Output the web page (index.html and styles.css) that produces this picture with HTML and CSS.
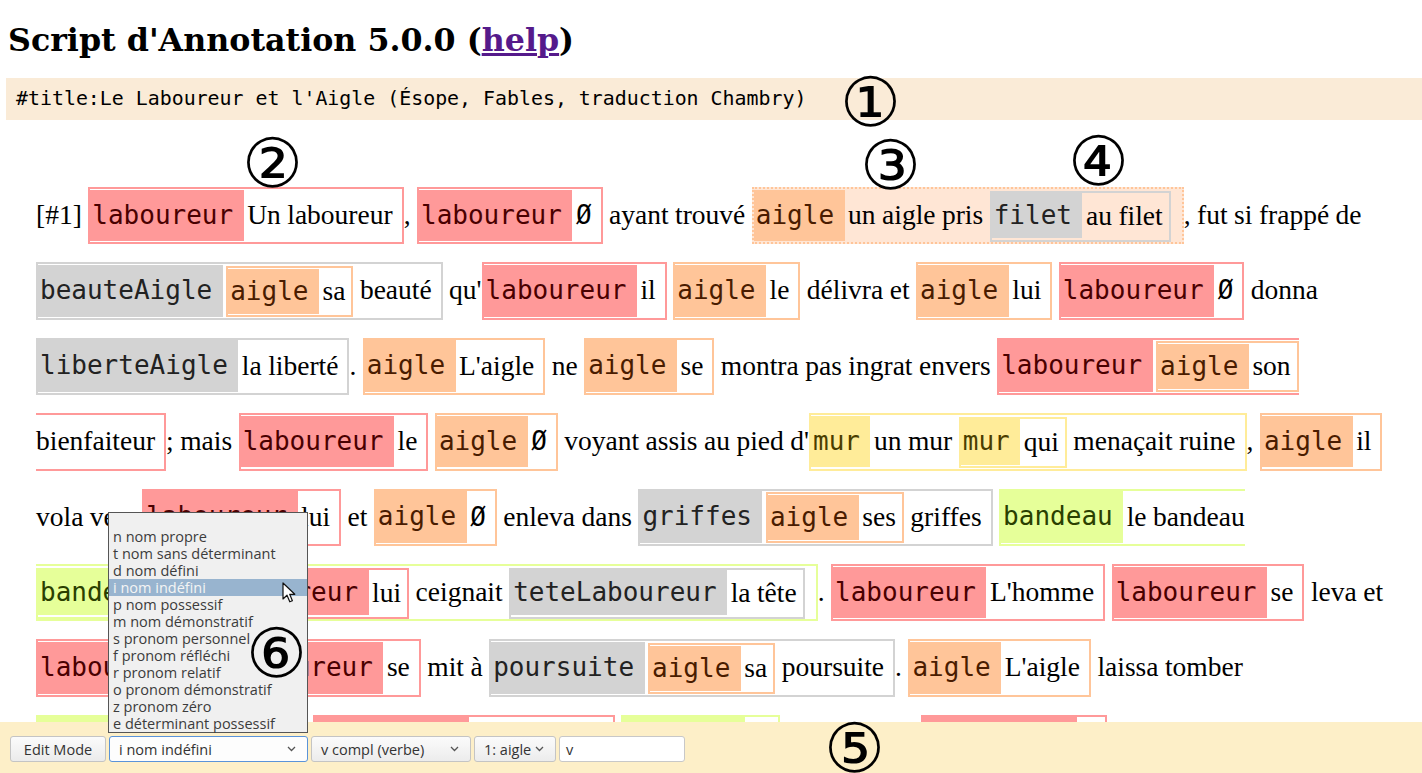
FILE: index.html
```html
<!DOCTYPE html>
<html lang="fr">
<head>
<meta charset="utf-8">
<title>Script d'Annotation 5.0.0</title>
<link rel="stylesheet" href="styles.css">
</head>
<body>
<main class="content">
<h1>Script d'Annotation 5.0.0 (<a href="#help">help</a>)</h1>
<div class="title-bar">#title:Le Laboureur et l'Aigle (Ésope, Fables, traduction Chambry)</div>
<p class="text">[#1] <span class="a p"><span class="t">laboureur</span><span class="w">Un laboureur</span></span>, <span class="a p"><span class="t">laboureur</span><span class="w z">Ø</span></span> ayant trouvé <span class="a o sel pe"><span class="t">aigle</span><span class="w">un aigle pris</span> <span class="a g n"><span class="t">filet</span><span class="w">au filet</span></span></span>, fut si frappé de<br><span class="a g"><span class="t">beauteAigle</span><span class="a o n"><span class="t">aigle</span><span class="w">sa</span></span> <span class="w">beauté</span></span> qu'<span class="a p"><span class="t">laboureur</span><span class="w">il</span></span> <span class="a o"><span class="t">aigle</span><span class="w">le</span></span> délivra et <span class="a o"><span class="t">aigle</span><span class="w">lui</span></span> <span class="a p"><span class="t">laboureur</span><span class="w z">Ø</span></span> donna<br><span class="a g"><span class="t">liberteAigle</span><span class="w">la liberté</span></span>. <span class="a o"><span class="t">aigle</span><span class="w">L'aigle</span></span> ne <span class="a o"><span class="t">aigle</span><span class="w">se</span></span> montra pas ingrat envers <span class="a p"><span class="t">laboureur</span><span class="a o n"><span class="t">aigle</span><span class="w">son</span></span><br><span class="w">bienfaiteur</span></span>; mais <span class="a p"><span class="t">laboureur</span><span class="w">le</span></span> <span class="a o"><span class="t">aigle</span><span class="w z">Ø</span></span> voyant assis au pied d'<span class="a y"><span class="t">mur</span><span class="w">un mur</span> <span class="a y n"><span class="t">mur</span><span class="w">qui</span></span> <span class="w">menaçait ruine</span></span>, <span class="a o"><span class="t">aigle</span><span class="w">il</span></span><br>vola vers <span class="a p"><span class="t">laboureur</span><span class="w">lui</span></span> et <span class="a o"><span class="t">aigle</span><span class="w z">Ø</span></span> enleva dans <span class="a g"><span class="t">griffes</span><span class="a o n"><span class="t">aigle</span><span class="w">ses</span></span> <span class="w">griffes</span></span> <span class="a gr pe"><span class="t">bandeau</span><span class="w">le bandeau</span><br><span class="a gr n"><span class="t">bandeau</span><span class="w">qui</span></span> <span class="a p n"><span class="t">laboureur</span><span class="w">lui</span></span> <span class="w">ceignait</span> <span class="a g n"><span class="t">teteLaboureur</span><span class="w">la tête</span></span></span>. <span class="a p"><span class="t">laboureur</span><span class="w">L'homme</span></span> <span class="a p"><span class="t">laboureur</span><span class="w">se</span></span> leva et<br><span class="a p"><span class="t">laboureur</span><span class="w z">Ø</span></span> <span class="a p"><span class="t">laboureur</span><span class="w">se</span></span> mit à <span class="a g"><span class="t">poursuite</span><span class="a o n"><span class="t">aigle</span><span class="w">sa</span></span> <span class="w">poursuite</span></span>. <span class="a o"><span class="t">aigle</span><span class="w">L'aigle</span></span> laissa tomber<br><span class="a gr"><span class="t">bandeau</span><span class="w">le bandeau</span></span> ; <span class="a p"><span class="t">laboureur</span><span class="w">le laboureur</span></span> <span class="a gr"><span class="t">bandeau</span><span class="w">le</span></span> ramassa, et, <span class="a p"><span class="t">laboureur</span><span class="w z">Ø</span></span> revenant sur ses pas,</p>
</main>

<div class="toolbar">
  <div class="btn">Edit Mode</div>
  <div class="select s1 focus">
    <span>i nom indéfini</span>
    <svg class="chev" width="9" height="6" viewBox="0 0 9 6"><polyline points="1,1 4.5,4.5 8,1" fill="none" stroke="#555" stroke-width="1.3"/></svg>
    <ul class="popup">
      <li class="empty"></li>
      <li>n nom propre</li>
      <li>t nom sans déterminant</li>
      <li>d nom défini</li>
      <li class="hl">i nom indéfini</li>
      <li>p nom possessif</li>
      <li>m nom démonstratif</li>
      <li>s pronom personnel</li>
      <li>f pronom réfléchi</li>
      <li>r pronom relatif</li>
      <li>o pronom démonstratif</li>
      <li>z pronom zéro</li>
      <li>e déterminant possessif</li>
    </ul>
  </div>
  <div class="select s2">
    <span>v compl (verbe)</span>
    <svg class="chev" width="9" height="6" viewBox="0 0 9 6"><polyline points="1,1 4.5,4.5 8,1" fill="none" stroke="#555" stroke-width="1.3"/></svg>
  </div>
  <div class="select s3">
    <span>1: aigle</span>
    <svg class="chev" width="9" height="6" viewBox="0 0 9 6"><polyline points="1,1 4.5,4.5 8,1" fill="none" stroke="#555" stroke-width="1.3"/></svg>
  </div>
  <div class="input">v</div>
</div>

<svg class="cursor" width="14" height="22" viewBox="0 0 14 22"><path d="M1,1 L1,17 L5,13.2 L7.8,19.8 L10.4,18.7 L7.7,12.3 L12.8,12.3 Z" fill="#fff" stroke="#111" stroke-width="1.2" stroke-linejoin="round"/></svg>

<span class="mark m1">①</span>
<span class="mark m2">②</span>
<span class="mark m3">③</span>
<span class="mark m4">④</span>
<span class="mark m5">⑤</span>
<span class="mark m6">⑥</span>
</body>
</html>
```

FILE: styles.css
```css
html, body {
  margin: 0;
  padding: 0;
  height: 100%;
  overflow: hidden;
}
body {
  background: #fff;
  color: #000;
  font-family: "DejaVu Serif", serif;
  position: relative;
}
.content {
  display: block;
  height: calc(100% - 51px);
  overflow: hidden;
  padding-top: 21px;
  box-sizing: border-box;
}
h1 {
  margin: 0 8px;
  font-family: "DejaVu Serif", serif;
  font-size: 31.7px;
  line-height: 37px;
  font-weight: bold;
}
h1 a { color: #551a8b; }

.title-bar {
  margin: 20px 0 0 6px;
  padding: 0 10px;
  height: 42px;
  line-height: 42px;
  background: #faebd7;
  font-family: "DejaVu Sans Mono", monospace;
  font-size: 19.9px;
  white-space: nowrap;
}

.text {
  margin: 57px 0 0;
  padding: 0 0 0 36px;
  font-family: "Liberation Serif", serif;
  font-size: 27.5px;
  line-height: 75.4px;
  word-spacing: -0.4px;
}
.text span { line-height: 0; }

.a {
  border: 2px solid;
  padding: 10px 9px 12.3px 0;
}
.a.n { padding: 6.5px 6px 9.6px 0; }
.a.pe { padding-right: 11px; }
.t {
  font-family: "DejaVu Sans Mono", monospace;
  font-size: 26px;
  padding: 10.4px 10.5px 11.1px 2px;
  margin-right: 3.5px;
}
.n > .t { padding: 6.9px 10.5px 8.4px 2px; }
.z {
  font-family: "DejaVu Sans Mono", monospace;
  font-size: 26px;
}

.p { border-color: #ff9999; }
.p > .t { background: #ff9999; color: #4a0000; }
.o { border-color: #ffc599; }
.o > .t { background: #ffc599; color: #4a1c00; }
.g { border-color: #d3d3d3; }
.g > .t { background: #d3d3d3; color: #222; }
.y { border-color: #ffec99; }
.y > .t { background: #ffec99; color: #4a3d00; }
.gr { border-color: #e6ff99; }
.gr > .t { background: #e6ff99; color: #2a4000; }
.sel { border-style: dotted; background: #ffe6d5; }

.toolbar {
  position: fixed;
  left: 0;
  right: 0;
  bottom: 0;
  height: 51px;
  box-sizing: border-box;
  padding: 14px 10px 0;
  display: flex;
  align-items: flex-start;
  gap: 3px;
  background: #fdefc8;
  font-family: "Open Sans", sans-serif;
  font-size: 14.5px;
  color: #333;
  z-index: 2;
}
.btn {
  width: 96px;
  height: 26px;
  box-sizing: border-box;
  border: 1px solid #c4c4c4;
  border-radius: 3px;
  background: linear-gradient(#fbfbfb, #ebebeb);
  display: flex;
  align-items: center;
  justify-content: center;
}
.select {
  position: relative;
  height: 26px;
  box-sizing: border-box;
  border: 1px solid #c4c4c4;
  border-radius: 3px;
  background: linear-gradient(#fbfbfb, #ececec);
  display: flex;
  align-items: center;
  justify-content: space-between;
  padding: 0 11px 0 9px;
}
.select.focus { border-color: #5a93d9; background: #fdfdfd; }
.s1 { width: 199px; }
.s2 { width: 160px; }
.s3 { width: 82px; }
.input {
  width: 126px;
  height: 26px;
  box-sizing: border-box;
  border: 1px solid #c8c8c8;
  border-radius: 3px;
  background: #fff;
  padding: 0 6px;
  display: flex;
  align-items: center;
}

.popup {
  position: absolute;
  left: -2px;
  bottom: 28px;
  width: 200px;
  box-sizing: border-box;
  margin: 0;
  padding: 0;
  list-style: none;
  border: 1px solid #555;
  background: #f0f0f0;
  color: #3c3c3c;
  font-size: 14.5px;
  z-index: 3;
}
.popup li {
  height: 17px;
  line-height: 17px;
  padding-left: 4px;
  white-space: nowrap;
}
.popup li.empty { height: 15px; }
.popup li.hl { background: #98b4cf; color: #f4f4f4; }

.cursor {
  position: absolute;
  left: 282px;
  top: 582px;
  z-index: 5;
}

.mark {
  position: absolute;
  font-family: "DejaVu Sans", sans-serif;
  font-weight: normal;
  font-size: 68px;
  line-height: 68px;
  color: #000;
  z-index: 6;
}
.m1 { left: 840px; top: 69px; }
.m2 { left: 242px; top: 130px; }
.m3 { left: 860px; top: 132px; }
.m4 { left: 1068px; top: 128px; }
.m5 { left: 824px; top: 715px; }
.m6 { left: 246px; top: 620px; }
```
